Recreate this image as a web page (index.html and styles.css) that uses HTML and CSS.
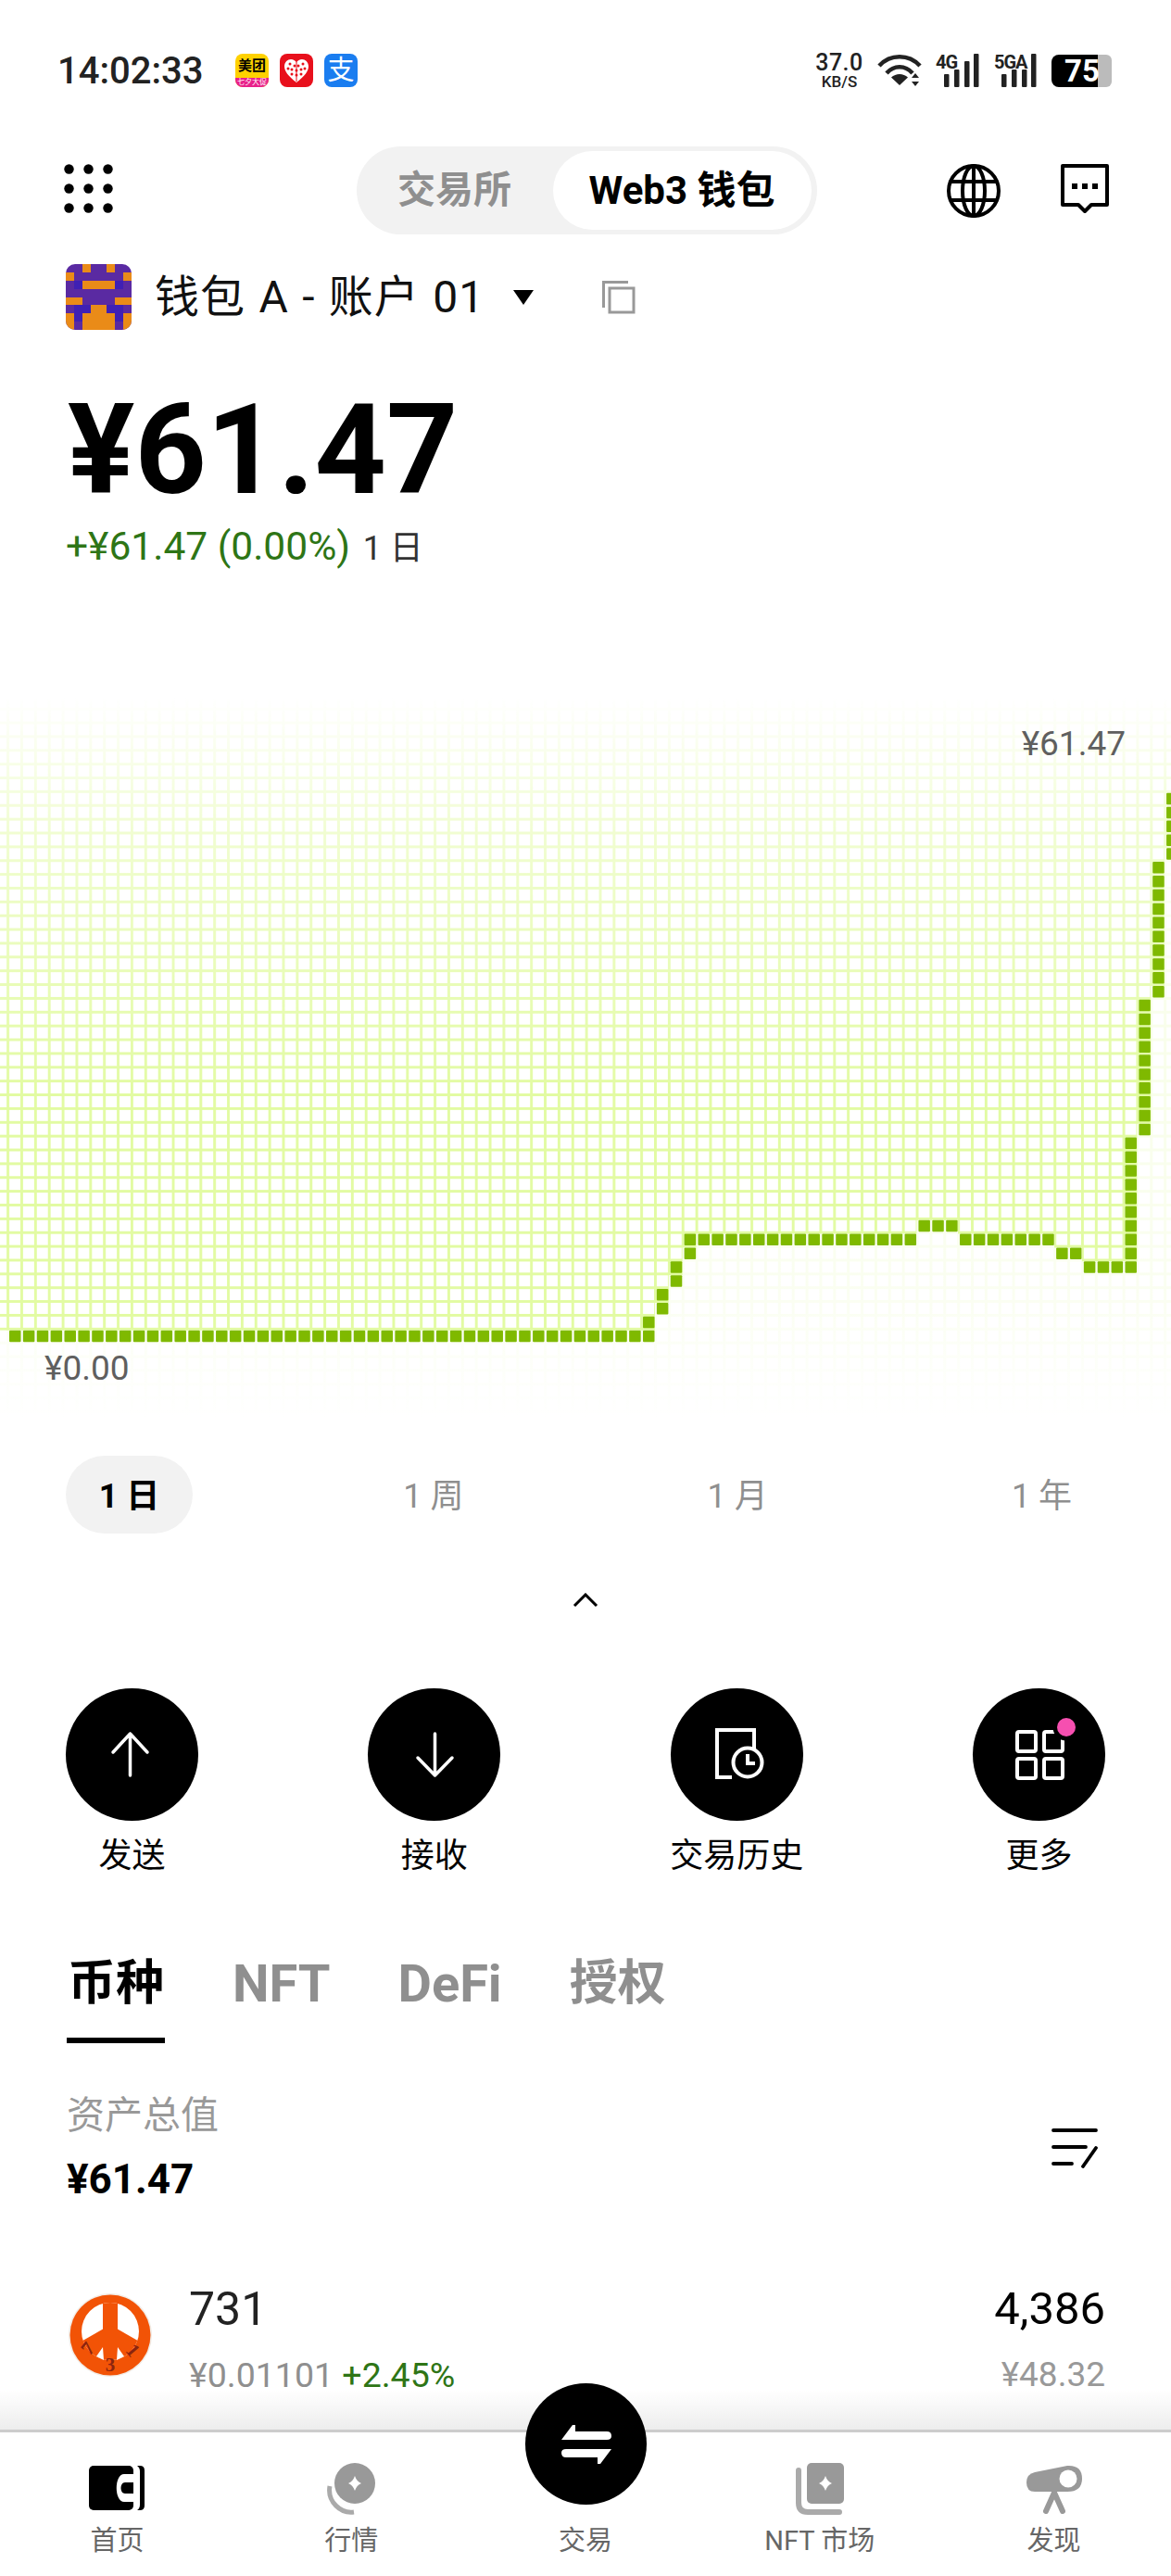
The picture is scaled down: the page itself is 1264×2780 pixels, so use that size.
FILE: index.html
```html
<!DOCTYPE html>
<html lang="zh-CN">
<head>
    <meta charset="UTF-8">
    <meta name="viewport" content="width=device-width, initial-scale=1.0">
    <title>Web3 钱包</title>
    <link rel="stylesheet" href="styles.css">
</head>
<body>
<div class="page">
    <!-- Status Bar -->
    <div class="status">
        <div class="status-left">
            <span class="clock">14:02:33</span>
            <span class="app-icon app-meituan"><b>美团</b><i>七夕大促</i></span>
            <span class="app-icon app-pdd">
                <svg viewBox="0 0 36 36" width="36" height="36">
                    <path d="M18 31 C9 24 5 19 5 13.500 C5 9 8.500 6 12 6 C14.500 6 16.800 7.300 18 9.500 C19.200 7.300 21.500 6 24 6 C27.500 6 31 9 31 13.500 C31 19 27 24 18 31 Z" fill="#fff"/>
                    <g fill="#e8101c">
                        <circle cx="11" cy="11" r="1.500"/><circle cx="16" cy="13" r="1.500"/><circle cx="20" cy="13" r="1.500"/><circle cx="25" cy="11" r="1.500"/>
                        <circle cx="9" cy="16" r="1.500"/><circle cx="13" cy="17" r="1.500"/><circle cx="18" cy="18" r="1.500"/><circle cx="23" cy="17" r="1.500"/><circle cx="27" cy="16" r="1.500"/>
                        <circle cx="13" cy="22" r="1.500"/><circle cx="18" cy="23" r="1.500"/><circle cx="23" cy="22" r="1.500"/>
                    </g>
                    <path d="M18 9 V30" stroke="#e8101c" stroke-width="1"/>
                </svg>
            </span>
            <span class="app-icon app-alipay">支</span>
        </div>
        <div class="status-right">
            <span class="speed"><b>37.0</b><small>KB/S</small></span>
            <svg class="wifi" viewBox="0 0 50 38" width="50" height="38">
                <g fill="none" stroke="#222" stroke-width="4.500">
                    <path d="M2 14 C14 1 34 1 46 14"/>
                    <path d="M10 22 C18 13 30 13 38 22"/>
                </g>
                <path d="M15 29 L24 38 L33 29 C28 24 20 24 15 29 Z" fill="#222" transform="translate(0 -1) scale(1 .95)"/>
                <path d="M41 22 L45 27 H37 Z M37 31 H45 L41 36 Z" fill="#222"/>
            </svg>
            <svg class="signal" viewBox="0 0 48 38" width="48" height="38">
                <text x="0" y="17" class="signal-text">4G</text>
                <rect x="9" y="23" width="5.500" height="14" rx="1" fill="#222"/>
                <rect x="20" y="18" width="5.500" height="19" rx="1" fill="#222"/>
                <rect x="31" y="9" width="5.500" height="28" rx="1" fill="#222"/>
                <rect x="41" y="1" width="5.500" height="36" rx="1" fill="#222"/>
            </svg>
            <svg class="signal" viewBox="0 0 48 38" width="48" height="38">
                <text x="0" y="17" class="signal-text">5GA</text>
                <rect x="8" y="23" width="5.500" height="14" rx="1" fill="#222"/>
                <rect x="19" y="18" width="5.500" height="19" rx="1" fill="#222"/>
                <rect x="30" y="18" width="5.500" height="19" rx="1" fill="#222"/>
                <rect x="40" y="1" width="5.500" height="36" rx="1" fill="#222"/>
            </svg>
            <span class="battery"><span class="battery-level">75</span></span>
        </div>
    </div>

    <!-- Top Bar -->
    <div class="topbar">
        <div class="topbar-left">
            <svg viewBox="0 0 53 53" width="53" height="53">
                <g fill="#000">
                    <circle cx="5.500" cy="5.500" r="5.200"/><circle cx="26.500" cy="5.500" r="5.200"/><circle cx="47.500" cy="5.500" r="5.200"/>
                    <circle cx="5.500" cy="26.500" r="5.200"/><circle cx="26.500" cy="26.500" r="5.200"/><circle cx="47.500" cy="26.500" r="5.200"/>
                    <circle cx="5.500" cy="47.500" r="5.200"/><circle cx="26.500" cy="47.500" r="5.200"/><circle cx="47.500" cy="47.500" r="5.200"/>
                </g>
            </svg>
        </div>
        <div class="switch">
            <span class="switch-item">交易所</span>
            <span class="switch-item active">Web3 钱包</span>
        </div>
        <div class="topbar-right">
            <svg viewBox="0 0 58 58" width="58" height="58">
                <g fill="none" stroke="#000" stroke-width="4">
                    <circle cx="29" cy="29" r="27"/>
                    <ellipse cx="29" cy="29" rx="12" ry="27"/>
                    <path d="M29 2 V56 M5 19 H53 M5 39 H53"/>
                </g>
            </svg>
            <svg viewBox="0 0 52 54" width="52" height="54">
                <path d="M2 2 H50 V44 H33 L26 51 L19 44 H2 Z" fill="none" stroke="#000" stroke-width="4" stroke-linejoin="round"/>
                <rect x="12" y="21" width="6" height="6" fill="#000"/>
                <rect x="23" y="21" width="6" height="6" fill="#000"/>
                <rect x="34" y="21" width="6" height="6" fill="#000"/>
            </svg>
        </div>
    </div>

    <!-- Account -->
    <div class="account">
        <svg class="avatar" viewBox="0 0 8 8" width="71" height="71" shape-rendering="crispEdges">
            <rect width="8" height="8" fill="#5a2aa2"/>
            <g fill="#3f20b4">
                <rect x="1" y="2" width="1" height="1"/><rect x="6" y="2" width="1" height="1"/>
                <rect x="1" y="5" width="2" height="1"/><rect x="5" y="5" width="2" height="1"/>
                <rect x="1" y="6" width="1" height="1"/><rect x="6" y="6" width="1" height="1"/>
            </g>
            <g fill="#ea8b18">
                <rect x="2" y="0" width="1" height="1"/><rect x="5" y="0" width="1" height="1"/>
                <rect x="0" y="1" width="1" height="1"/><rect x="7" y="1" width="1" height="1"/>
                <rect x="2" y="2" width="4" height="1"/>
                <rect x="0" y="4" width="2" height="1"/><rect x="6" y="4" width="2" height="1"/>
                <rect x="3" y="5" width="2" height="1"/>
                <rect x="0" y="6" width="1" height="2"/><rect x="7" y="6" width="1" height="2"/>
                <rect x="2" y="6" width="4" height="2"/>
            </g>
        </svg>
        <span class="account-name">钱包 A - 账户 01</span>
        <span class="caret"></span>
        <svg class="copy" viewBox="0 0 36 36" width="36" height="36">
            <path d="M1.500 29 V1.500 H28" fill="none" stroke="#999" stroke-width="3"/>
            <rect x="8" y="8" width="26" height="26" fill="none" stroke="#999" stroke-width="3"/>
        </svg>
    </div>

    <!-- Balance -->
    <h1 class="balance">¥61.47</h1>
    <p class="change"><span class="green">+¥61.47 (0.00%)</span> <span class="change-range">1 日</span></p>

    <!-- Chart -->
    <div class="chart">
        <svg id="chart-svg" viewBox="0 0 1264 800" width="1264" height="800">
            <defs>
                <pattern id="grid" width="14.87" height="14.87" patternUnits="userSpaceOnUse" patternTransform="translate(7.130 692.830)">
                    <path d="M0 0 H14.870 V2.900 H2.900 V14.870 H0 Z" fill="#e2fba2"/>
                </pattern>
                <linearGradient id="grid-fade" x1="0" y1="0" x2="0" y2="800" gradientUnits="userSpaceOnUse">
                    <stop offset="0.015" stop-color="#fff" stop-opacity="0"/>
                    <stop offset="0.2" stop-color="#fff" stop-opacity="0.5"/>
                    <stop offset="0.55" stop-color="#fff" stop-opacity="1"/>
                </linearGradient>
                <mask id="grid-mask">
                    <rect width="1264" height="800" fill="url(#grid-fade)"/>
                </mask>
                <linearGradient id="under-fade" x1="0" y1="340" x2="0" y2="790" gradientUnits="userSpaceOnUse">
                    <stop offset="0" stop-color="#fff" stop-opacity="0.75"/>
                    <stop offset="0.7" stop-color="#fff" stop-opacity="0.85"/>
                    <stop offset="1" stop-color="#fff" stop-opacity="1"/>
                </linearGradient>
            </defs>
            <rect width="1264" height="800" fill="url(#grid)" mask="url(#grid-mask)"/>
        </svg>
        <span class="chart-label chart-high">¥61.47</span>
        <span class="chart-label chart-low">¥0.00</span>
    </div>

    <!-- Range Tabs -->
    <div class="ranges">
        <span class="range active">1 日</span>
        <span class="range">1 周</span>
        <span class="range">1 月</span>
        <span class="range">1 年</span>
    </div>

    <div class="collapse">
        <svg viewBox="0 0 28 16" width="28" height="16">
            <path d="M2 14 L14 2 L26 14" fill="none" stroke="#000" stroke-width="3"/>
        </svg>
    </div>

    <!-- Actions -->
    <div class="actions">
        <div class="action">
            <span class="action-circle">
                <svg viewBox="0 0 143 143" width="143" height="143">
                    <path d="M51 69 L69.500 49 L88 69 M69.500 49 V94" fill="none" stroke="#fff" stroke-width="3.500" stroke-linecap="round" stroke-linejoin="round"/>
                </svg>
            </span>
            <span class="action-label">发送</span>
        </div>
        <div class="action">
            <span class="action-circle">
                <svg viewBox="0 0 143 143" width="143" height="143">
                    <path d="M54 75 L72.500 94 L91 75 M72.500 49 V94" fill="none" stroke="#fff" stroke-width="3.500" stroke-linecap="round" stroke-linejoin="round"/>
                </svg>
            </span>
            <span class="action-label">接收</span>
        </div>
        <div class="action">
            <span class="action-circle">
                <svg viewBox="0 0 143 143" width="143" height="143">
                    <g fill="none" stroke="#fff" stroke-width="4">
                        <path d="M90 65 V45 H50 V96 H66"/>
                        <circle cx="83" cy="80" r="15.500"/>
                        <path d="M83 71 V81 H91"/>
                    </g>
                </svg>
            </span>
            <span class="action-label">交易历史</span>
        </div>
        <div class="action">
            <span class="action-circle">
                <svg viewBox="0 0 143 143" width="143" height="143">
                    <g fill="none" stroke="#fff" stroke-width="4">
                        <rect x="48" y="47" width="20" height="21" rx="2"/>
                        <rect x="77" y="47" width="20" height="21" rx="2"/>
                        <rect x="48" y="76" width="20" height="21" rx="2"/>
                        <rect x="77" y="76" width="20" height="21" rx="2"/>
                    </g>
                    <circle cx="101" cy="42" r="14.500" fill="#000"/>
                    <circle cx="101" cy="42" r="10" fill="#f64fb0"/>
                </svg>
            </span>
            <span class="action-label">更多</span>
        </div>
    </div>

    <!-- Asset Tabs -->
    <div class="tabs">
        <span class="tab active">币种</span>
        <span class="tab tab-latin">NFT</span>
        <span class="tab tab-latin">DeFi</span>
        <span class="tab">授权</span>
    </div>

    <div class="total">
        <div>
            <div class="total-label">资产总值</div>
            <div class="total-value">¥61.47</div>
        </div>
        <svg viewBox="0 0 50 44" width="50" height="44">
            <g fill="none" stroke="#000" stroke-width="3.800" stroke-linecap="round">
                <path d="M2 3 H48 M2 21 H37 M2 39 H22 M48 22 L34 42"/>
            </g>
        </svg>
    </div>

    <!-- Token Row -->
    <div class="token">
        <svg class="token-logo" viewBox="0 0 90 90" width="90" height="90">
            <defs>
                <clipPath id="logo-inner">
                    <circle cx="45" cy="41" r="31"/>
                </clipPath>
            </defs>
            <circle cx="45" cy="45" r="45" fill="#f2ece6"/>
            <circle cx="45" cy="45" r="43.500" fill="#f25306"/>
            <g clip-path="url(#logo-inner)">
                <rect width="90" height="90" fill="#fff"/>
                <path d="M45 5 V40" stroke="#f25306" stroke-width="16"/>
                <path d="M45 34 L10 54 V90 H80 V54 Z" fill="#f25306"/>
            </g>
            <path d="M37 58 L30 68 L38 72 Z M53 58 L60 68 L52 72 Z" fill="#fff"/>
            <g class="token-logo-text">
                <text transform="translate(26 64) rotate(-50)" text-anchor="middle">7</text>
                <text x="45" y="84" text-anchor="middle">3</text>
                <text transform="translate(64 66) rotate(50)" text-anchor="middle">1</text>
            </g>
        </svg>
        <div class="token-info">
            <div class="token-name">731</div>
            <div class="token-sub"><span class="muted">¥0.01101</span> <span class="green">+2.45%</span></div>
        </div>
        <div class="token-amount">
            <div class="token-count">4,386</div>
            <div class="token-value">¥48.32</div>
        </div>
    </div>

    <!-- Bottom Nav -->
    <div class="nav">
        <a class="nav-item">
            <span class="nav-icon nav-icon-home">
                <svg viewBox="0 0 60 48" width="60" height="48">
                    <rect width="48" height="48" rx="5" fill="#000"/>
                    <path d="M48 9 H38 C27 9 27 39 38 39 H48 Z" fill="#fff"/>
                    <path d="M48 18 H39 C33 18 33 30 39 30 H48 Z" fill="#000"/>
                    <path d="M52 0 H55 Q60 0 60 5 V43 Q60 48 55 48 H52 Q55 46 55 42 V6 Q55 2 52 0 Z" fill="#000"/>
                </svg>
            </span>
            <span class="nav-label">首页</span>
        </a>
        <a class="nav-item">
            <span class="nav-icon">
                <svg viewBox="0 0 54 56" width="54" height="56">
                    <path d="M4 25 C1 42 16 55 30 53" fill="none" stroke="#aaa" stroke-width="5"/>
                    <circle cx="31" cy="22" r="22" fill="#999"/>
                    <path d="M31 14 Q33 20 38 22 Q33 24 31 30 Q29 24 24 22 Q29 20 31 14 Z" fill="#fff"/>
                </svg>
            </span>
            <span class="nav-label">行情</span>
        </a>
        <a class="nav-item">
            <span class="nav-icon"></span>
            <span class="nav-label">交易</span>
        </a>
        <a class="nav-item">
            <span class="nav-icon">
                <svg viewBox="0 0 52 56" width="52" height="56">
                    <path d="M3 8 V43 Q3 53 13 53 H47" fill="none" stroke="#aaa" stroke-width="6" stroke-linecap="round"/>
                    <rect x="12" y="0" width="40" height="44" rx="5" fill="#999"/>
                    <path d="M32 14 Q34 20 39 22 Q34 24 32 30 Q30 24 25 22 Q30 20 32 14 Z" fill="#fff"/>
                </svg>
            </span>
            <span class="nav-label">NFT 市场</span>
        </a>
        <a class="nav-item">
            <span class="nav-icon">
                <svg viewBox="0 0 60 56" width="60" height="56">
                    <path d="M9 10 L44 3 Q60 2 60 17 Q60 31 44 31 H9 Q0 31 0 21 Q0 12 9 10 Z" fill="#999"/>
                    <circle cx="45" cy="17" r="9.500" fill="#fff"/>
                    <path d="M30 32 L21 52 M30 32 L39 52" fill="none" stroke="#999" stroke-width="6" stroke-linecap="round"/>
                </svg>
            </span>
            <span class="nav-label">发现</span>
        </a>
        <span class="trade-btn">
            <svg viewBox="0 0 56 44" width="56" height="44">
                <path d="M1 17 L13 1 H16 V8 H50 Q55 8 55 13 Q55 17 50 17 Z" fill="#fff"/>
                <path d="M6 27 H55 L43 43 H40 V36 H6 Q1 36 1 31 Q1 27 6 27 Z" fill="#fff"/>
            </svg>
        </span>
    </div>
</div>
<script src="chart.js"></script>
</body>
</html>
```

FILE: styles.css
```css
/* Global Styles */
* {
    box-sizing: border-box;
}
body {
    margin: 0;
    background: #fff;
    font-family: Roboto, "Noto Sans CJK SC", sans-serif;
    color: #000;
}
.page {
    position: relative;
    width: 1264px;
    height: 2780px;
    overflow: hidden;
}
.green {
    color: #2e7516;
}
.muted {
    color: #8f8f8f;
}

/* Status Bar */
.status {
    display: flex;
    justify-content: space-between;
    height: 158px;
    padding: 57px 64px 0 62px;
}
.status-left {
    display: flex;
    align-items: center;
    height: 38px;
}
.clock {
    width: 192px;
    font-size: 40px;
    font-weight: 500;
    color: #222;
}
.app-icon {
    display: flex;
    flex-direction: column;
    align-items: center;
    justify-content: center;
    width: 36px;
    height: 36px;
    margin-right: 12px;
    border-radius: 8px;
    overflow: hidden;
}
.app-meituan {
    background: #ffd100;
}
.app-meituan b {
    flex: 1;
    font-size: 15px;
    line-height: 26px;
    white-space: nowrap;
}
.app-meituan i {
    width: 100%;
    height: 10px;
    background: #e8208a;
    color: #fff;
    font-size: 8px;
    font-style: normal;
    line-height: 10px;
    text-align: center;
    white-space: nowrap;
}
.app-pdd {
    background: #e8101c;
}
.app-alipay {
    background: #1a7df0;
    color: #fff;
    font-size: 29px;
    line-height: 36px;
}
.status-right {
    display: flex;
    align-items: flex-start;
}
.speed {
    display: flex;
    flex-direction: column;
    align-items: center;
    width: 54px;
    margin-top: -2px;
    margin-right: 14px;
    color: #222;
}
.speed b {
    font-size: 25px;
    font-weight: 500;
    line-height: 25px;
    letter-spacing: 0.5px;
}
.speed small {
    font-size: 17px;
    font-weight: 500;
    line-height: 16px;
}
.wifi {
    margin-right: 13px;
}
.signal {
    margin-right: 15px;
    overflow: visible;
}
.signal-text {
    font-size: 20px;
    font-weight: 700;
    fill: #222;
    letter-spacing: -1px;
}
.battery {
    position: relative;
    width: 65px;
    height: 35px;
    margin-top: 2px;
    margin-left: -1px;
    background: linear-gradient(90deg, #000 50px, #bbb 50px);
    border-radius: 8px 6px 6px 8px;
}
.battery-level {
    display: block;
    width: 50px;
    padding-left: 14px;
    color: #fff;
    font-size: 33px;
    font-weight: 700;
    line-height: 35px;
}

/* Top Bar */
.topbar {
    display: grid;
    grid-template-columns: 1fr auto 1fr;
    align-items: center;
    height: 95px;
    padding: 0 67px 0 69px;
}
.topbar-right {
    display: flex;
    justify-content: flex-end;
    gap: 65px;
}
.switch {
    display: flex;
    align-items: center;
    width: 497px;
    height: 95px;
    padding: 5px 6px 5px 0;
    background: #f2f2f2;
    border-radius: 48px;
}
.switch-item {
    flex: 1;
    font-size: 41px;
    font-weight: 700;
    line-height: 85px;
    text-align: center;
    color: #8f8f8f;
}
.switch-item.active {
    flex: 0 0 279px;
    background: #fff;
    border-radius: 43px;
    color: #000;
    font-size: 42px;
}

/* Account */
.account {
    display: flex;
    align-items: center;
    height: 71px;
    margin-top: 32px;
    padding-left: 71px;
}
.avatar {
    border-radius: 10px;
}
.account-name {
    margin-left: 25px;
    font-size: 48px;
    line-height: 71px;
    letter-spacing: 1px;
    word-spacing: 1.5px;
    color: #111;
}
.caret {
    width: 0;
    height: 0;
    margin-left: 31px;
    border-left: 11px solid transparent;
    border-right: 11px solid transparent;
    border-top: 16px solid #000;
}
.copy {
    margin-left: 74px;
}

/* Balance */
.balance {
    margin: 63px 0 0 73px;
    font-size: 135px;
    font-weight: 700;
    line-height: 134px;
}
.change {
    margin: 11px 0 0 71px;
    font-size: 42.5px;
    line-height: 52px;
}
.change-range {
    margin-left: 3px;
    font-size: 36px;
    color: #333;
}

/* Chart */
.chart {
    position: absolute;
    top: 740px;
    left: 0;
    width: 1264px;
    height: 800px;
}
.chart svg {
    display: block;
}
.chart-label {
    position: absolute;
    font-size: 37px;
    line-height: 44px;
    color: #5f5f5f;
}
.chart-high {
    top: 41px;
    right: 49px;
}
.chart-low {
    top: 715px;
    left: 48px;
}

/* Range Tabs */
.ranges {
    position: absolute;
    top: 1571px;
    left: 71px;
    display: flex;
    justify-content: space-between;
    width: 1122px;
}
.range {
    width: 137px;
    height: 84px;
    padding-top: 2px;
    border-radius: 42px;
    font-size: 36px;
    line-height: 84px;
    text-align: center;
    color: #8f8f8f;
}
.range.active {
    background: #f2f2f2;
    color: #000;
    font-weight: 700;
}
.collapse {
    position: absolute;
    top: 1719px;
    left: 618px;
}
.collapse svg {
    display: block;
}

/* Actions */
.actions {
    position: absolute;
    top: 1822px;
    left: 71px;
    display: flex;
    justify-content: space-between;
    width: 1122px;
}
.action {
    display: flex;
    flex-direction: column;
    align-items: center;
    width: 143px;
}
.action-circle {
    width: 143px;
    height: 143px;
    background: #000;
    border-radius: 50%;
}
.action-circle svg {
    display: block;
}
.action-label {
    margin-top: 16px;
    font-size: 36px;
    line-height: 44px;
    white-space: nowrap;
}

/* Asset Tabs */
.tabs {
    position: absolute;
    top: 2106px;
    left: 72px;
    display: flex;
    gap: 73px;
}
.tab {
    height: 99px;
    font-size: 52px;
    font-weight: 700;
    line-height: 70px;
    color: #8f8f8f;
}
.tab-latin {
    font-size: 56px;
}
.tab.active {
    width: 106px;
    border-bottom: 6px solid #000;
    color: #000;
    text-align: center;
}
.total {
    position: absolute;
    top: 2257px;
    left: 72px;
    display: flex;
    justify-content: space-between;
    align-items: center;
    width: 1113px;
}
.total-label {
    font-size: 41px;
    line-height: 52px;
    color: #999;
}
.total-value {
    margin-top: 17px;
    font-size: 44px;
    font-weight: 700;
    line-height: 52px;
}

/* Token Row */
.token {
    position: absolute;
    top: 2475px;
    left: 74px;
    display: flex;
    width: 1119px;
}
.token-logo-text {
    font-family: "Liberation Serif", serif;
    font-size: 21px;
    font-weight: 700;
    fill: #8a2410;
}
.token-info {
    margin-left: 40px;
}
.token-name {
    margin-top: -12px;
    font-size: 50px;
    line-height: 58px;
    color: #222;
}
.token-sub {
    margin-top: 20px;
    font-size: 37.5px;
    line-height: 44px;
}
.token-amount {
    margin-left: auto;
    text-align: right;
}
.token-count {
    margin-top: -12px;
    font-size: 49px;
    line-height: 58px;
}
.token-value {
    margin-top: 20px;
    font-size: 37px;
    line-height: 44px;
    color: #999;
}

/* Bottom Nav */
.nav {
    position: absolute;
    bottom: 0;
    left: 0;
    display: grid;
    grid-template-columns: repeat(5, 1fr);
    width: 1264px;
    height: 158px;
    padding-top: 33px;
    background: #fff;
    border-top: 3px solid #ccc;
}
.nav::before {
    content: "";
    position: absolute;
    top: -46px;
    left: 0;
    width: 100%;
    height: 43px;
    background: linear-gradient(rgba(0, 0, 0, 0), rgba(0, 0, 0, 0.07));
}
.nav-item {
    display: flex;
    flex-direction: column;
    align-items: center;
}
.nav-icon {
    display: flex;
    align-items: flex-start;
    height: 56px;
}
.nav-icon-home {
    padding-top: 3px;
}
.nav-label {
    margin-top: 12px;
    font-size: 29px;
    line-height: 32px;
    color: #666;
    white-space: nowrap;
}
.trade-btn {
    position: absolute;
    top: -53px;
    left: 567px;
    display: flex;
    align-items: center;
    justify-content: center;
    width: 131px;
    height: 131px;
    background: #000;
    border-radius: 50%;
}
```

FILE: chart.js
```js
// Draws the pixel line on top of the grid in the chart svg
const svg = document.getElementById("chart-svg");
const NS = "http://www.w3.org/2000/svg";
const PITCH = 14.87;
const LEFT = 10;
const BOTTOM = 695.7; // top of the lowest row

// [first column, last column, first level, last level]
const segments = [
    [0, 46, 0, 0],
    [46, 46, 1, 1],
    [47, 47, 2, 3],
    [48, 48, 4, 5],
    [49, 49, 6, 6],
    [49, 65, 7, 7],
    [66, 68, 8, 8],
    [69, 75, 7, 7],
    [76, 77, 6, 6],
    [78, 81, 5, 5],
    [81, 81, 6, 14],
    [82, 82, 15, 24],
    [83, 83, 25, 34],
    [84, 84, 35, 39]
];

function colX(col) {
    return LEFT + col * PITCH;
}

function rowY(level) {
    return BOTTOM - level * PITCH;
}

// Top level of the line in each column, for the pale area under it
const lowest = {};
segments.forEach(([c1, c2, l1]) => {
    for (let c = c1; c <= c2; c++) {
        if (lowest[c] === undefined || l1 < lowest[c]) lowest[c] = l1;
    }
});

let points = `0,${rowY(lowest[0])}`;
for (let c = 0; c <= 84; c++) {
    const y = rowY(lowest[c]);
    points += ` ${colX(c) - 2},${y} ${colX(c) + PITCH - 2},${y}`;
}
points += " 1264,800 0,800";

const under = document.createElementNS(NS, "polygon");
under.setAttribute("points", points);
under.setAttribute("fill", "url(#under-fade)");
svg.appendChild(under);

segments.forEach(([c1, c2, l1, l2]) => {
    for (let c = c1; c <= c2; c++) {
        for (let l = l1; l <= l2; l++) {
            const cell = document.createElementNS(NS, "rect");
            cell.setAttribute("x", colX(c));
            cell.setAttribute("y", rowY(l));
            cell.setAttribute("width", 12.5);
            cell.setAttribute("height", 12.5);
            cell.setAttribute("rx", 1);
            cell.setAttribute("fill", "#7fb900");
            svg.appendChild(cell);
        }
    }
});
```
